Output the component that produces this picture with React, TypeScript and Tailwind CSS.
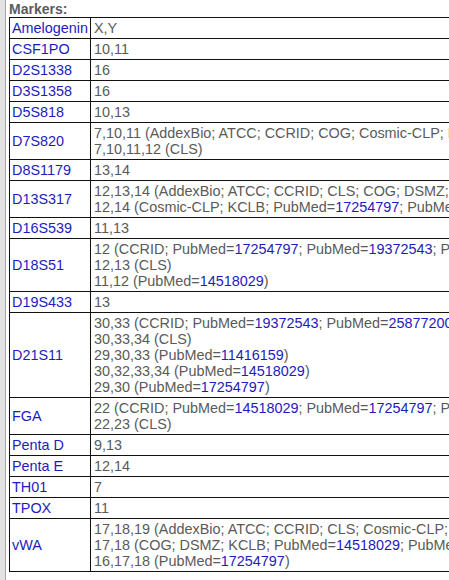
type Part = string | { id: string };

type Marker = {
  name: string;
  lines: Part[][];
};

const pm = (id: string): Part[] => ['PubMed=', { id }];

const markers: Marker[] = [
  { name: 'Amelogenin', lines: [['X,Y']] },
  { name: 'CSF1PO', lines: [['10,11']] },
  { name: 'D2S1338', lines: [['16']] },
  { name: 'D3S1358', lines: [['16']] },
  { name: 'D5S818', lines: [['10,13']] },
  {
    name: 'D7S820',
    lines: [
      ['7,10,11 (AddexBio; ATCC; CCRID; COG; Cosmic-CLP; DSMZ; KCLB; ', ...pm('14518029'), ')'],
      ['7,10,11,12 (CLS)'],
    ],
  },
  { name: 'D8S1179', lines: [['13,14']] },
  {
    name: 'D13S317',
    lines: [
      ['12,13,14 (AddexBio; ATCC; CCRID; CLS; COG; DSMZ; ', ...pm('14518029'), ')'],
      ['12,14 (Cosmic-CLP; KCLB; ', ...pm('17254797'), '; ', ...pm('19372543'), ')'],
    ],
  },
  { name: 'D16S539', lines: [['11,13']] },
  {
    name: 'D18S51',
    lines: [
      ['12 (CCRID; ', ...pm('17254797'), '; ', ...pm('19372543'), '; ', ...pm('25877200'), ')'],
      ['12,13 (CLS)'],
      ['11,12 (', ...pm('14518029'), ')'],
    ],
  },
  { name: 'D19S433', lines: [['13']] },
  {
    name: 'D21S11',
    lines: [
      ['30,33 (CCRID; ', ...pm('19372543'), '; ', ...pm('25877200'), ')'],
      ['30,33,34 (CLS)'],
      ['29,30,33 (', ...pm('11416159'), ')'],
      ['30,32,33,34 (', ...pm('14518029'), ')'],
      ['29,30 (', ...pm('17254797'), ')'],
    ],
  },
  {
    name: 'FGA',
    lines: [
      ['22 (CCRID; ', ...pm('14518029'), '; ', ...pm('17254797'), '; ', ...pm('19372543'), ')'],
      ['22,23 (CLS)'],
    ],
  },
  { name: 'Penta D', lines: [['9,13']] },
  { name: 'Penta E', lines: [['12,14']] },
  { name: 'TH01', lines: [['7']] },
  { name: 'TPOX', lines: [['11']] },
  {
    name: 'vWA',
    lines: [
      ['17,18,19 (AddexBio; ATCC; CCRID; CLS; Cosmic-CLP; ', ...pm('19372543'), ')'],
      ['17,18 (COG; DSMZ; KCLB; ', ...pm('14518029'), '; ', ...pm('25877200'), ')'],
      ['16,17,18 (', ...pm('17254797'), ')'],
    ],
  },
];

function Line({ parts }: { parts: Part[] }) {
  return (
    <div>
      {parts.map((p, i) =>
        typeof p === 'string' ? (
          <span key={i}>{p}</span>
        ) : (
          <a key={i} className="text-[#1c1cc0]">
            {p.id}
          </a>
        )
      )}
    </div>
  );
}

export default function App() {
  return (
    <div
      className="flex h-[580px] w-[449px] overflow-hidden bg-white text-[14.4px] leading-[16px]"
      style={{ fontFamily: '"Liberation Sans", Arial, sans-serif' }}
    >
      {/* left page gutter */}
      <div className="w-[5px] shrink-0 bg-[#e2e2e2]" />
      <div className="w-[1px] shrink-0 bg-[#a4a4a4]" />

      <div className="min-w-0 flex-1 pl-[3px] pt-[1px]">
        <div className="text-[14px] font-bold text-[#5c5c5c]">Markers:</div>
        <table className="border-collapse whitespace-nowrap text-[#5a5a5a]">
          <tbody>
            {markers.map((m) => (
              <tr key={m.name}>
                <td className="border border-[#111111] px-[2px] py-[2px] align-middle text-[#1c1cc0]">
                  {m.name}
                </td>
                <td className="border border-[#111111] py-[2px] pl-[3px] pr-[2px] align-middle">
                  {m.lines.map((l, i) => (
                    <Line key={i} parts={l} />
                  ))}
                </td>
              </tr>
            ))}
          </tbody>
        </table>
      </div>
    </div>
  );
}
